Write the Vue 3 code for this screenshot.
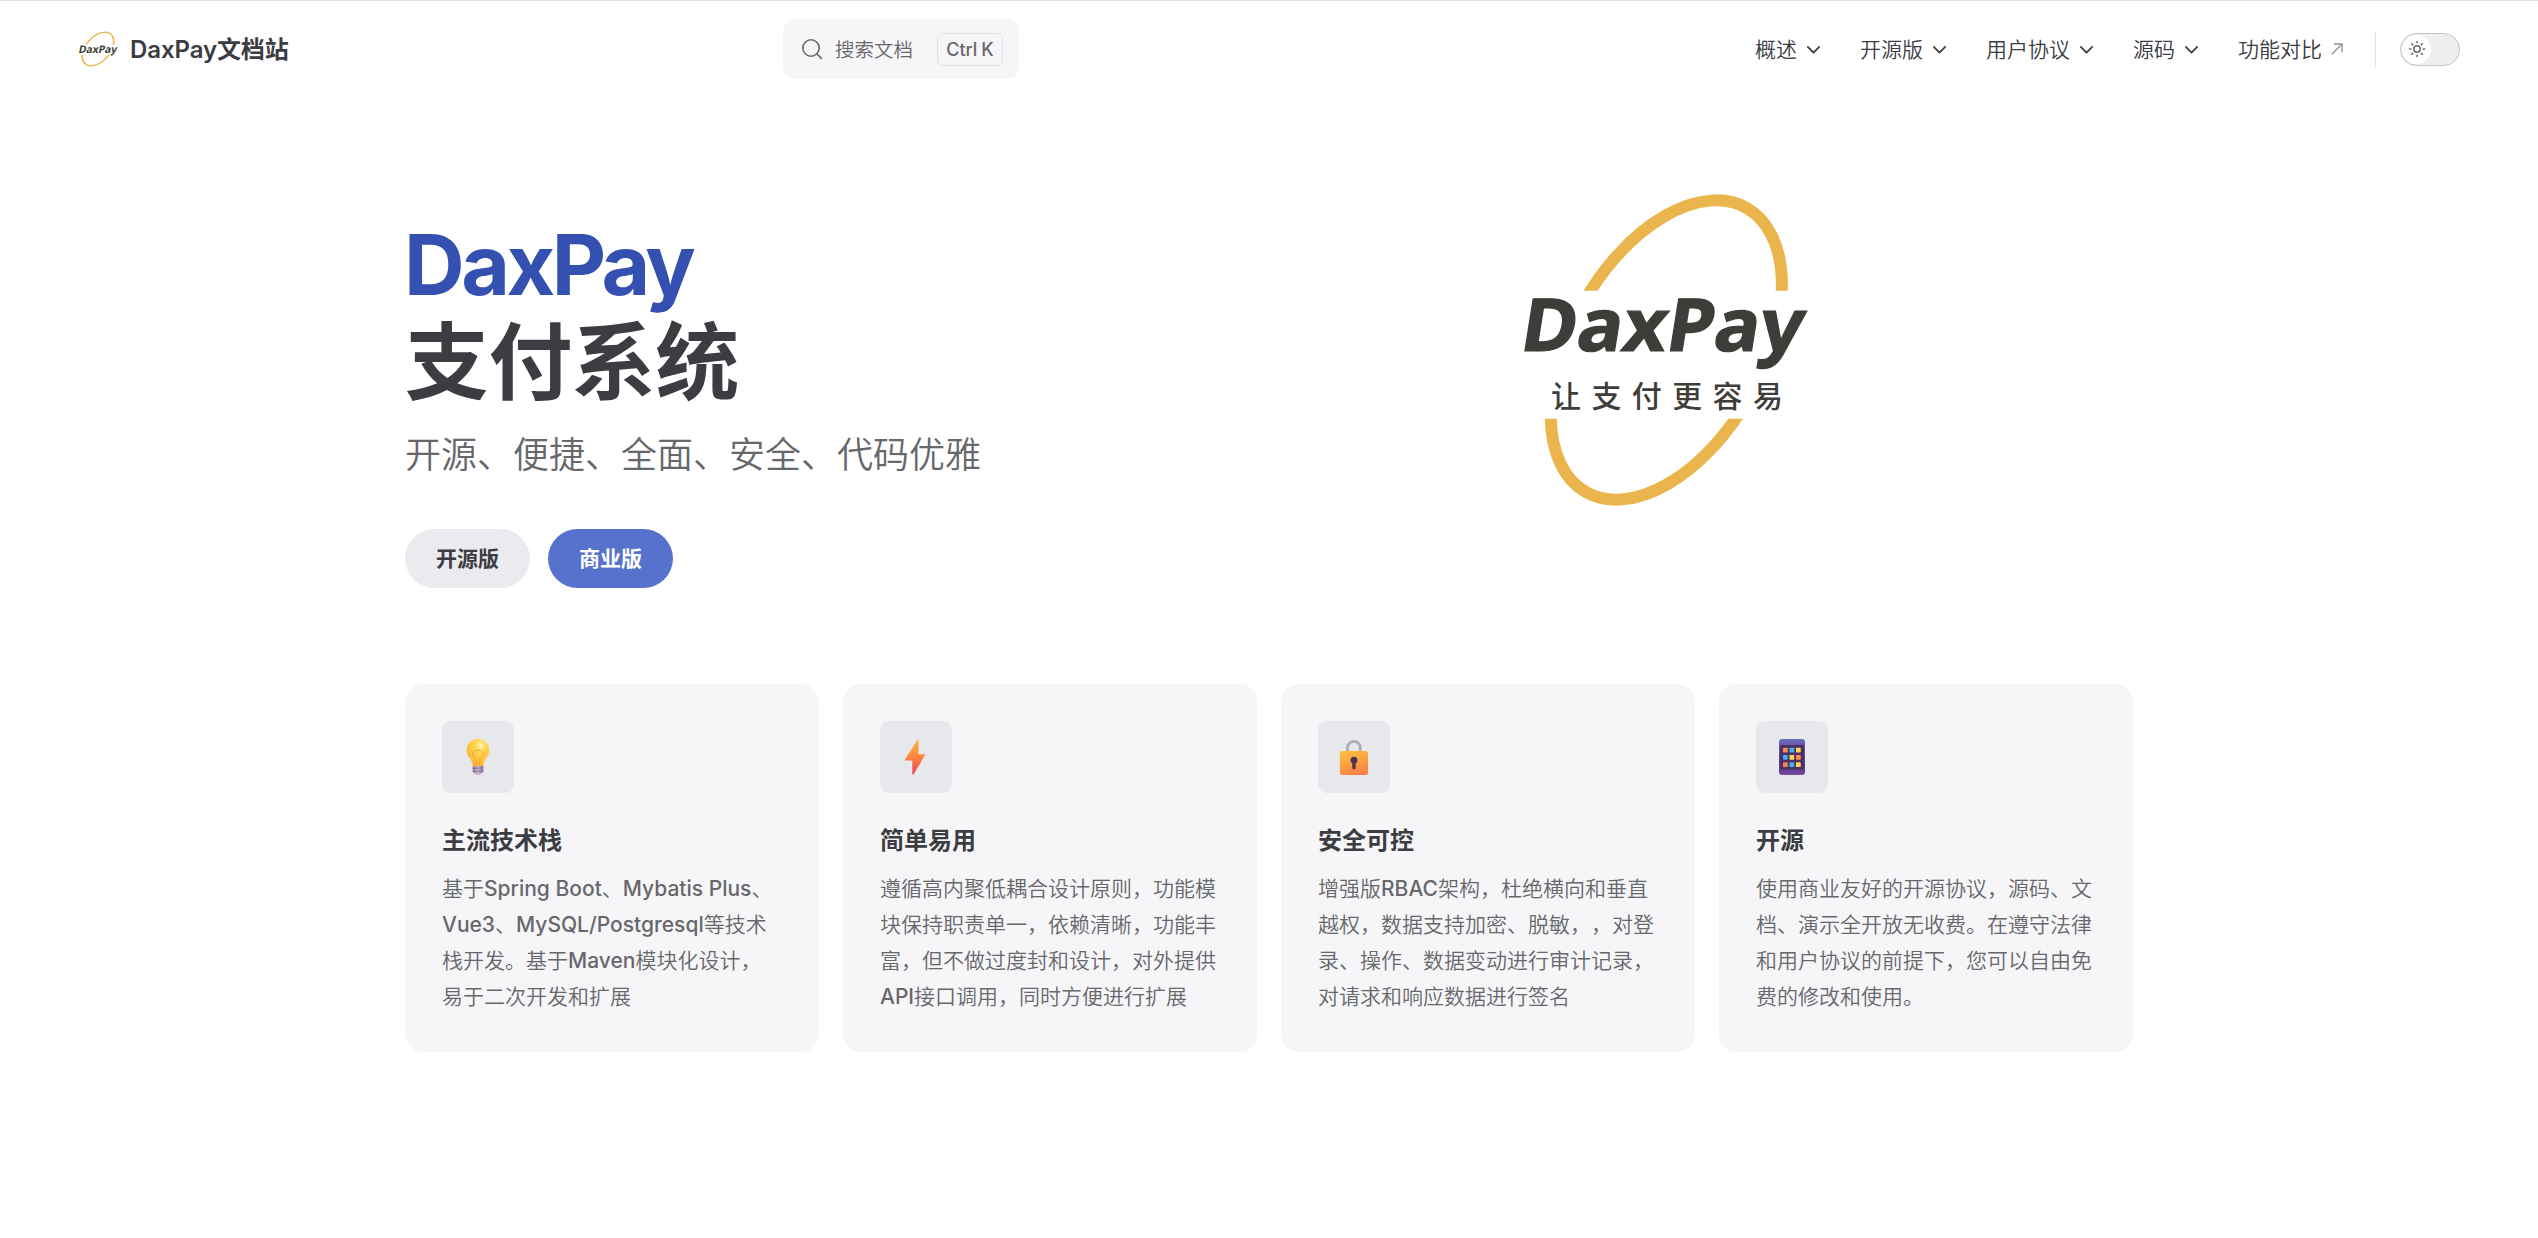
<script setup>
const navItems = [
  { text: '概述', menu: true },
  { text: '开源版', menu: true },
  { text: '用户协议', menu: true },
  { text: '源码', menu: true },
  { text: '功能对比', menu: false },
]

const features = [
  {
    icon: 'bulb',
    title: '主流技术栈',
    lines: ['基于Spring Boot、Mybatis Plus、', 'Vue3、MySQL/Postgresql等技术', '栈开发。基于Maven模块化设计，', '易于二次开发和扩展'],
  },
  {
    icon: 'bolt',
    title: '简单易用',
    lines: ['遵循高内聚低耦合设计原则，功能模', '块保持职责单一，依赖清晰，功能丰', '富，但不做过度封和设计，对外提供', 'API接口调用，同时方便进行扩展'],
  },
  {
    icon: 'lock',
    title: '安全可控',
    lines: ['增强版RBAC架构，杜绝横向和垂直', '越权，数据支持加密、脱敏，，对登', '录、操作、数据变动进行审计记录，', '对请求和响应数据进行签名'],
  },
  {
    icon: 'pad',
    title: '开源',
    lines: ['使用商业友好的开源协议，源码、文', '档、演示全开放无收费。在遵守法律', '和用户协议的前提下，您可以自由免', '费的修改和使用。'],
  },
]

const keys = [
  '#ff8a50', '#3fb1f5', '#ffd84f',
  '#3fb1f5', '#ffd84f', '#ff8a50',
  '#f5814f', '#3fb1f5', '#ffd84f',
]

// Latin runs are set heavier than the Chinese text around them.
const runs = (line) => line.match(/[\x20-\x7e]+|[^\x20-\x7e]+/g).map((t) => ({ t, latin: /^[\x20-\x7e]/.test(t) }))
</script>

<template>
  <div class="page">
    <header class="nav">
      <a class="brand">
        <svg class="brand-logo" viewBox="1520 190 292 320" width="40" height="36" preserveAspectRatio="none">
          <defs>
            <clipPath id="ring-s"><path d="M1500 170h330v142h-330zM1500 402h330v130h-330z" /></clipPath>
          </defs>
          <g clip-path="url(#ring-s)">
            <ellipse cx="1666" cy="350" rx="163.2" ry="94.5" transform="rotate(-60.5 1666 350)" fill="none" stroke="#eab54c" stroke-width="12" />
          </g>
          <text class="logo-word" transform="translate(1521 385) skewX(-9)" font-size="94" textLength="280" lengthAdjust="spacingAndGlyphs">DaxPay</text>
        </svg>
        <span class="brand-text">DaxPay文档站</span>
      </a>
      <button class="search">
        <svg width="22" height="22" viewBox="0 0 22 22" fill="none" stroke="#67676c" stroke-width="1.6" stroke-linecap="round">
          <circle cx="10" cy="10" r="8.2" /><path d="m16 16 4.4 4.4" />
        </svg>
        <span class="search-text">搜索文档</span>
        <span class="kbd"><span>Ctrl</span><span>K</span></span>
      </button>
      <nav class="menu">
        <a v-for="item in navItems" :key="item.text" class="menu-item">
          <span class="menu-text">{{ item.text }}</span>
          <svg v-if="item.menu" class="chev" width="21" height="21" viewBox="0 0 24 24" fill="none" stroke="#3c3c43" stroke-width="2" stroke-linecap="round" stroke-linejoin="round"><path d="m5.500 9 6.500 6.500L18.500 9" /></svg>
          <svg v-else class="ext" width="12" height="12" viewBox="0 0 12 12" fill="none" stroke="#929295" stroke-width="1.4"><path d="M.8 11.200 11 1M2.800 1H11v8.200" /></svg>
        </a>
      </nav>
      <span class="divider"></span>
      <span class="switch">
        <span class="knob">
          <svg width="18" height="18" viewBox="0 0 18 18" fill="none" stroke="#67676c" stroke-width="1.5">
            <circle cx="9" cy="9" r="3.200" />
            <path stroke-linecap="round" d="M9 1.500v1.300M9 15.200v1.300M1.500 9h1.300M15.200 9h1.300M3.700 3.700l.9.9M13.400 13.400l.9.9M3.700 14.300l.9-.9M13.400 4.600l.9-.9" />
          </svg>
        </span>
      </span>
    </header>

    <main class="main">
      <section class="hero">
        <div class="intro">
          <h1>
            <span class="name">DaxPay</span>
            <span class="headline">支付系统</span>
          </h1>
          <p class="tagline">开源、便捷、全面、安全、代码优雅</p>
          <div class="actions">
            <a class="btn alt">开源版</a>
            <a class="btn primary">商业版</a>
          </div>
        </div>
        <svg class="hero-logo" viewBox="1500 170 330 350" width="330" height="350">
          <defs>
            <clipPath id="ring-l"><path d="M1500 170h330v120.700h-330zM1500 418.700h330v102h-330z" /></clipPath>
          </defs>
          <g clip-path="url(#ring-l)">
            <ellipse cx="1666.300" cy="350" rx="163.2" ry="95.500" transform="rotate(-60.5 1666.300 350)" fill="none" stroke="#eab54c" stroke-width="12" />
          </g>
          <text class="logo-word" transform="translate(1518.500 351) skewX(-9)" font-size="73" stroke="#3e3d3a" stroke-width="1.2" textLength="282" lengthAdjust="spacingAndGlyphs">DaxPay</text>
          <text class="logo-sub" x="1551" y="406.500">让支付更容易</text>
        </svg>
      </section>

      <section class="features">
        <article v-for="f in features" :key="f.title" class="card">
          <div class="icon">
            <svg v-if="f.icon === 'bulb'" width="36" height="36" viewBox="0 0 36 36">
              <defs>
                <radialGradient id="bulb" cx=".62" cy=".25" r=".8">
                  <stop offset="0" stop-color="#fff6b8" /><stop offset=".3" stop-color="#ffd64f" /><stop offset="1" stop-color="#fdb02d" />
                </radialGradient>
                <linearGradient id="cap"><stop offset="0" stop-color="#8f7aa0" /><stop offset=".5" stop-color="#cdbfd6" /><stop offset="1" stop-color="#8a6fa3" /></linearGradient>
              </defs>
              <path d="M18 0C11.600 0 6.700 4.900 6.700 11.200c0 3.500 1.600 6 3.500 8.600 1.500 2.100 2.300 4.200 2.500 7.700h10.600c.2-3.500 1-5.600 2.500-7.700 1.900-2.600 3.500-5.100 3.500-8.600C29.300 4.900 24.400 0 18 0z" fill="url(#bulb)" />
              <path d="M16.200 27v-7.500c-2-.9-3.300-2.200-3.300-4.200 0-2.500 2.200-4.200 5.100-4.200s5.100 1.700 5.100 4.200c0 2-1.300 3.300-3.300 4.200V27" fill="none" stroke="#f0a235" stroke-width="1" />
              <path d="M12.700 27h10.600v5.500c0 .8-.8 1.500-2 1.500-.4 1.300-1.500 2-3.300 2s-2.900-.7-3.300-2c-1.200 0-2-.7-2-1.500z" fill="url(#cap)" />
              <path d="M12.700 29.500l10.600-.8M12.700 32.500l10.600-.8" stroke="#77608c" stroke-width=".8" />
            </svg>
            <svg v-else-if="f.icon === 'bolt'" width="36" height="36" viewBox="0 0 36 36">
              <defs>
                <linearGradient id="bolt" x1="0" y1="0" x2="0" y2="1"><stop offset="0" stop-color="#ffb23e" /><stop offset=".45" stop-color="#fc8b40" /><stop offset="1" stop-color="#ee4256" /></linearGradient>
              </defs>
              <path d="M19.200 1.200c.4-.7 1.300-.5 1.300.4v13.600h6c.6 0 .9.500.5 1.100L15.600 35.300c-.4.7-1.300.5-1.300-.4V21.500H7.500c-.6 0-.9-.5-.5-1.100z" fill="url(#bolt)" />
            </svg>
            <svg v-else-if="f.icon === 'lock'" width="36" height="36" viewBox="0 0 36 36">
              <defs>
                <linearGradient id="lock" x1=".3" y1="0" x2=".7" y2="1"><stop offset="0" stop-color="#fdbc3e" /><stop offset=".5" stop-color="#fba040" /><stop offset="1" stop-color="#fb7d4c" /></linearGradient>
              </defs>
              <path d="M11.500 14V8.800a6.400 6.400 0 0 1 12.800 0V14" fill="none" stroke="#b4abbb" stroke-width="3" />
              <rect x="3.800" y="12" width="28.200" height="24" rx="2.500" fill="url(#lock)" />
              <circle cx="18" cy="21.200" r="3.400" fill="#4a3256" />
              <rect x="16.300" y="21.500" width="3.400" height="8.700" rx="1.500" fill="#4a3256" />
            </svg>
            <svg v-else width="36" height="36" viewBox="0 0 36 36">
              <defs>
                <linearGradient id="pad" x1="0" y1="0" x2="0" y2="1"><stop offset="0" stop-color="#6471c4" /><stop offset=".14" stop-color="#6a5ab0" /><stop offset=".8" stop-color="#5a3a8c" /><stop offset="1" stop-color="#7a4da4" /></linearGradient>
              </defs>
              <rect x="5" y="0" width="26" height="36" rx="3" fill="url(#pad)" />
              <rect x="6" y="6" width="24" height="24.500" rx="1" fill="#4d2f66" />
              <rect v-for="(c, i) in keys" :key="i" :x="9 + (i % 3) * 6.5" :y="8.700 + Math.floor(i / 3) * 7.300" width="4.700" height="4.700" rx=".6" :fill="c" />
            </svg>
          </div>
          <h2>{{ f.title }}</h2>
          <p class="details">
            <span v-for="line in f.lines" :key="line" class="line"><span v-for="(r, i) in runs(line)" :key="i" :class="{ latin: r.latin }">{{ r.t }}</span></span>
          </p>
        </article>
      </section>
    </main>
  </div>
</template>

<style>
body {
  background: #fff;
}
</style>

<style scoped>
.page {
  box-sizing: border-box;
  min-height: 1238px;
  border-top: 1px solid #e2e2e3;
  font-family: Inter, "Noto Sans CJK SC", sans-serif;
  text-spacing-trim: space-all;
  color: #3c3c43;
  background: #fff;
}
.nav {
  display: flex;
  align-items: center;
  height: 96px;
  padding: 0 78px;
}
.brand {
  display: flex;
  align-items: center;
  gap: 12px;
  width: 705px;
  font-size: 24px;
  font-weight: 600;
  letter-spacing: -0.1px;
  white-space: nowrap;
}
.brand-logo {
  display: block;
  overflow: visible;
}
.brand-text {
  padding-bottom: 4px;
}
.logo-word {
  font-family: "Noto Sans", sans-serif;
  font-weight: 700;
  letter-spacing: 0;
  fill: #3e3d3a;
}
.logo-sub {
  font-family: "Noto Sans CJK SC", sans-serif;
  font-size: 30px;
  font-weight: 500;
  letter-spacing: 10.4px;
  fill: #3e3d3a;
}
.search {
  display: flex;
  align-items: center;
  box-sizing: border-box;
  width: 236px;
  height: 60px;
  padding: 0 16px 0 18px;
  border: 0;
  border-radius: 12px;
  background: #f6f6f8;
  color: #67676c;
  font-family: inherit;
}
.search-text {
  margin-left: 12px;
  padding-top: 2px;
  font-size: 19.500px;
  font-weight: 350;
  line-height: 30px;
  white-space: nowrap;
}
.kbd {
  display: flex;
  gap: 4px;
  align-items: center;
  justify-content: center;
  box-sizing: border-box;
  width: 66px;
  height: 33px;
  margin-left: auto;
  border: 1px solid #e2e2e3;
  border-radius: 6px;
  font-size: 18px;
  font-weight: 500;
}
.menu {
  display: flex;
  margin-left: auto;
}
.menu-item {
  display: flex;
  align-items: center;
  padding: 0 18px;
  font-size: 21px;
  font-weight: 350;
  white-space: nowrap;
}
.menu-text {
  padding-bottom: 3px;
}
.chev {
  margin-left: 6px;
}
.ext {
  margin-left: 9px;
}
.divider {
  width: 1px;
  height: 36px;
  margin: 0 24px 0 14px;
  background: #e2e2e3;
}
.switch {
  box-sizing: border-box;
  width: 60px;
  height: 33px;
  padding: 1px;
  border: 1px solid #c2c2c4;
  border-radius: 17px;
  background: #eeeff1;
}
.knob {
  display: flex;
  align-items: center;
  justify-content: center;
  width: 29px;
  height: 29px;
  border-radius: 50%;
  background: #fff;
}
.main {
  width: 1728px;
  margin: 0 auto;
}
.hero {
  display: flex;
  justify-content: space-between;
  height: 587px;
}
.intro {
  padding-top: 120px;
}
h1 {
  margin: 0;
  font-size: 84px;
  font-weight: 700;
  line-height: 96px;
  letter-spacing: -0.6px;
}
.name,
.headline {
  display: block;
}
.name {
  color: #3451b2;
  margin-left: -1px;
  letter-spacing: -3.500px;
}
.headline {
  padding-top: 2px;
}
.tagline {
  margin: 0;
  padding-top: 17px;
  font-size: 36px;
  font-weight: 350;
  line-height: 54px;
  color: #67676c;
}
.actions {
  display: flex;
  gap: 18px;
  padding-top: 47px;
}
.btn {
  box-sizing: border-box;
  width: 125px;
  height: 59px;
  border-radius: 30px;
  font-size: 21px;
  font-weight: 700;
  line-height: 59px;
  text-align: center;
}
.alt {
  background: #ebebef;
}
.primary {
  background: #5672cd;
  color: #fff;
}
.hero-logo {
  margin: 73px 303px 0 0;
}
.features {
  display: grid;
  grid-template-columns: repeat(4, 414px);
  gap: 24px;
}
.card {
  box-sizing: border-box;
  height: 368px;
  padding: 37px;
  border-radius: 18px;
  background: #f6f6f8;
}
.icon {
  display: flex;
  align-items: center;
  justify-content: center;
  width: 72px;
  height: 72px;
  margin-bottom: 30px;
  border-radius: 9px;
  background: #e7e8eb;
}
h2 {
  margin: 0;
  font-size: 24px;
  font-weight: 700;
  line-height: 36px;
}
.details {
  margin: 0;
  padding-top: 12px;
  font-size: 21px;
  font-weight: 350;
  line-height: 36px;
  color: #67676c;
}
.line {
  display: block;
  height: 36px;
  white-space: pre;
}
.latin {
  font-weight: 500;
}
</style>
